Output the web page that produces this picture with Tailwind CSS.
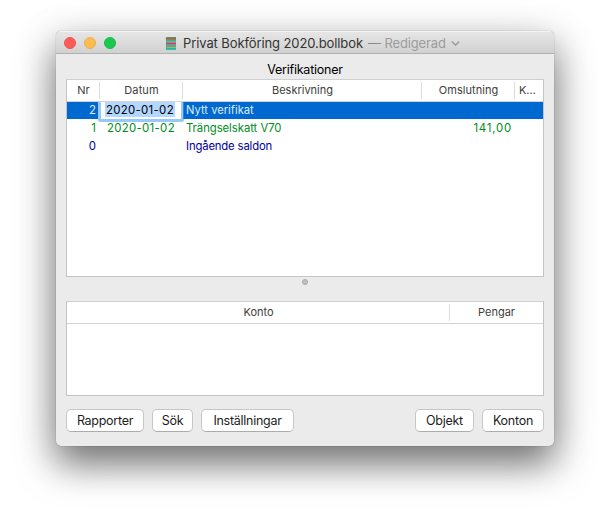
<!DOCTYPE html>
<html lang="sv">
<head>
<meta charset="utf-8">
<title>Privat Bokföring 2020.bollbok</title>
<script src="https://cdn.jsdelivr.net/npm/@tailwindcss/browser@4"></script>
</head>
<body class="h-[526px] w-[610px] overflow-hidden bg-white pt-[31px] pl-[56px] font-['Inter','Liberation_Sans',sans-serif]">
<main class="flex h-[415px] w-[498px] flex-col overflow-hidden rounded-[5px] bg-[#ebebeb] shadow-[0_0_1px_rgba(0,0,0,0.5),0_18px_36px_rgba(0,0,0,0.5),0_8px_46px_rgba(0,0,0,0.14)]">
  <header class="grid h-[23px] shrink-0 grid-cols-[105px_1fr_90px] items-center border-t border-b border-t-[#f4f4f4] border-b-[#b1b1b1] bg-linear-to-b from-[#e6e6e6] to-[#d1d1d1]">
    <div class="flex gap-2 pl-2">
      <span class="size-3 rounded-full border border-[#ee5550] bg-[#fc5b57]"></span>
      <span class="size-3 rounded-full border border-[#f0b04a] bg-[#fdbc4f]"></span>
      <span class="size-3 rounded-full border border-[#17bd4a] bg-[#1ac84f]"></span>
    </div>
    <div class="flex items-center pl-[4px] pt-[2px] whitespace-nowrap text-[13px]">
      <svg class="-mt-px h-[13px] w-3 shrink-0" viewBox="0 0 12 13">
        <path d="M1 1.2 2 .2h9v12.3H1Z" fill="#5b8a70"/>
        <path d="M1 1h10" stroke="#5a6b50" stroke-width="1"/>
        <path d="M1.5 2.2h9" stroke="#d9682f" stroke-width="1"/>
        <path d="M1 3.6h10" stroke="#17bfae" stroke-width="1.2"/>
        <path d="M1.2 5.1h9.8" stroke="#e0a860" stroke-width="1.4"/>
        <path d="M1 6.6h10" stroke="#b3408b" stroke-width="1.5"/>
        <path d="M1.2 8h9.8" stroke="#b8a0a0" stroke-width="1"/>
        <path d="M1 9.3h10" stroke="#17bfae" stroke-width="1.3"/>
        <path d="M1.5 10.6h9.5" stroke="#e0a04a" stroke-width="1.3"/>
        <path d="M1 12h10" stroke="#17bfae" stroke-width="1.4"/>
      </svg>
      <span class="ml-1.5 tracking-[-0.1px] text-[#333]">Privat Bokföring 2020.bollbok</span>
      <span class="ml-[5px] text-[#8b8b8b]">—</span>
      <span class="ml-[3.5px] tracking-[-0.14px] text-[#9c9c9c]">Redigerad</span>
      <svg class="ml-[5px] h-[5px] w-[9px] shrink-0" viewBox="0 0 9 5" fill="none" stroke="#9a9a9a" stroke-width="1.4"><path d="m.8.5 3.7 3.6L8.2.5"/></svg>
    </div>
  </header>

  <h1 class="mt-[7px] mb-px h-[17px] text-center text-[12.5px] leading-[17px] tracking-[-0.23px] text-black">Verifikationer</h1>

  <section class="mx-[10px] h-[198px] shrink-0 border border-[#c4c4c4] border-t-[#d0d0d0] bg-white text-[11px]">
    <div class="grid h-[22px] grid-cols-[33px_83px_239px_93px_28px] items-center border-b border-[#d3d3d3] text-center leading-[17px] text-[#404040]">
      <div class="h-[17px] border-r border-[#dcdcdc] pl-px">Nr</div>
      <div class="h-[17px] border-r border-[#dcdcdc] pl-px tracking-[0.1px]">Datum</div>
      <div class="h-[17px] border-r border-[#dcdcdc] pl-px">Beskrivning</div>
      <div class="h-[17px] border-r border-[#dcdcdc] pl-px tracking-[0.05px]">Omslutning</div>
      <div class="h-[17px] pl-1 text-left tracking-[-0.1px]">K…</div>
    </div>
    <div class="relative mb-px grid h-[17px] grid-cols-[33px_83px_239px_93px_28px] bg-[#0069d0] leading-[17px] text-[#dcebfa]">
      <div class="pr-1 text-right text-[11.4px]">2</div>
      <div class="relative">
        <div class="absolute top-0 -left-[2px] h-[20px] w-[86px] rounded-b-[3px] border-x-[3px] border-b-[3px] border-[#97c8f7] bg-white pl-[4px] text-[11.4px] tracking-[0.32px] text-black"><span class="inline-block h-[15px] w-[70px] bg-[#b3d7ff] pl-px leading-[17px]">2020-01-02</span></div>
        <div class="absolute top-0 left-[83px] h-[17px] w-px bg-[#2d85df]"></div>
      </div>
      <div class="pl-[3px] text-[11.2px]">Nytt verifikat</div>
      <div></div>
      <div></div>
    </div>
    <div class="mb-px grid h-[17px] grid-cols-[33px_83px_239px_93px_28px] leading-[17px] text-[#008e1e]">
      <div class="pr-1 text-right text-[11.4px]">1</div>
      <div class="pl-[7px] text-[11.4px] tracking-[0.32px]">2020-01-02</div>
      <div class="pl-[3px] text-[11.3px] tracking-[-0.04px]">Trängselskatt V70</div>
      <div class="pr-[3px] text-right text-[11.4px] tracking-[0.8px]">141,00</div>
      <div></div>
    </div>
    <div class="grid h-[17px] grid-cols-[33px_83px_239px_93px_28px] leading-[17px] text-[#0000a0]">
      <div class="pr-1 text-right text-[11.4px]">0</div>
      <div></div>
      <div class="pl-[3px] text-[11.3px] tracking-[-0.15px]">Ingående saldon</div>
      <div></div>
      <div></div>
    </div>
  </section>

  <div class="flex h-[24px] shrink-0 justify-center pt-[2px]"><span class="size-[6px] rounded-full border border-[#a9a9a9] bg-[#bfbfbf]"></span></div>

  <section class="mx-[10px] h-[95px] shrink-0 border border-[#c4c4c4] border-t-[#d0d0d0] bg-white text-[11px]">
    <div class="grid h-[22px] grid-cols-[383px_93px] items-center border-b border-[#d3d3d3] text-center leading-[17px] text-[#404040]">
      <div class="h-[17px] border-r border-[#dcdcdc] pl-px">Konto</div>
      <div class="h-[17px]">Pengar</div>
    </div>
  </section>

  <footer class="mt-[13px] flex gap-2 px-[10px] text-[12.5px] leading-[21px] tracking-[-0.27px] text-[#1c1c1c]">
    <button class="h-[23px] w-[78px] rounded-[5px] border border-[#c6c6c6] border-b-[#acacac] bg-white">Rapporter</button>
    <button class="h-[23px] w-[41px] rounded-[5px] border border-[#c6c6c6] border-b-[#acacac] bg-white">Sök</button>
    <button class="h-[23px] w-[93px] rounded-[5px] border border-[#c6c6c6] border-b-[#acacac] bg-white">Inställningar</button>
    <button class="ml-auto h-[23px] w-[59px] rounded-[5px] border border-[#c6c6c6] border-b-[#acacac] bg-white">Objekt</button>
    <button class="h-[23px] w-[62px] rounded-[5px] border border-[#c6c6c6] border-b-[#acacac] bg-white">Konton</button>
  </footer>
</main>
</body>
</html>
